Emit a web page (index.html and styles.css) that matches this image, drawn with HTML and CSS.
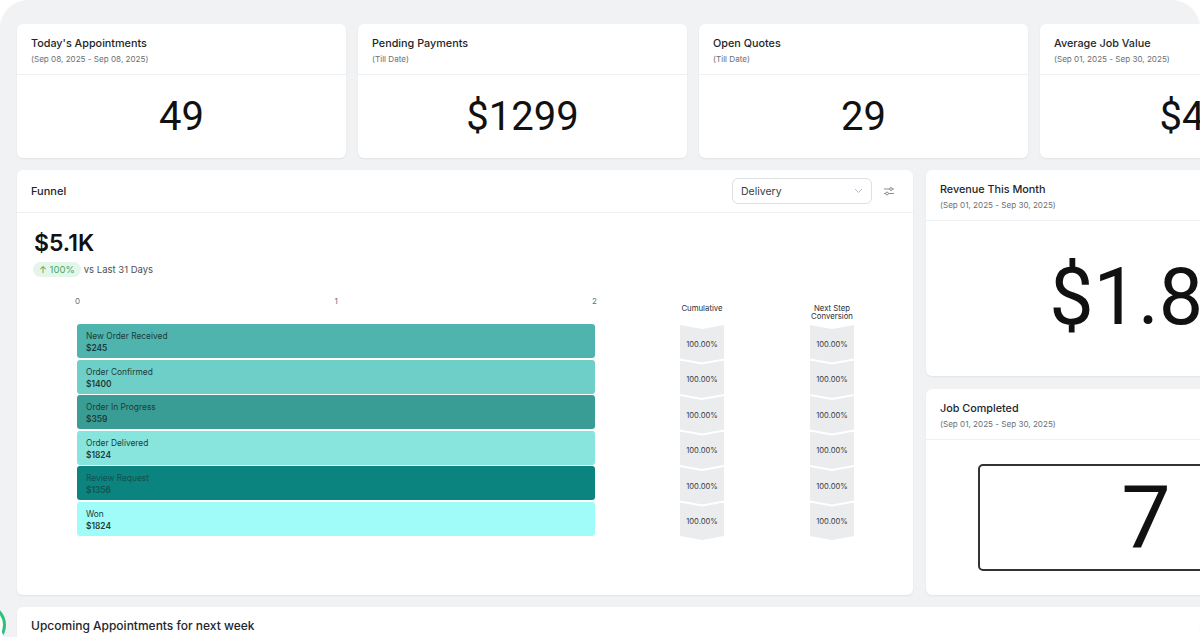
FILE: index.html
```html
<!DOCTYPE html>
<html lang="en">
<head>
<meta charset="utf-8">
<title>Dashboard</title>
<link rel="stylesheet" href="styles.css">
</head>
<body>
<div class="panel">
  <div class="row-stats">
    <div class="card stat">
      <div class="card-head">
        <div class="title">Today's Appointments</div>
        <div class="sub">(Sep 08, 2025 - Sep 08, 2025)</div>
      </div>
      <div class="stat-body">49</div>
    </div>
    <div class="card stat">
      <div class="card-head">
        <div class="title">Pending Payments</div>
        <div class="sub">(Till Date)</div>
      </div>
      <div class="stat-body">$1299</div>
    </div>
    <div class="card stat">
      <div class="card-head">
        <div class="title">Open Quotes</div>
        <div class="sub">(Till Date)</div>
      </div>
      <div class="stat-body">29</div>
    </div>
    <div class="card stat">
      <div class="card-head">
        <div class="title">Average Job Value</div>
        <div class="sub">(Sep 01, 2025 - Sep 30, 2025)</div>
      </div>
      <div class="stat-body">$450</div>
    </div>
  </div>

  <div class="row-main">
    <div class="card funnel">
      <div class="funnel-head">
        <div class="title">Funnel</div>
        <div class="head-tools">
          <div class="select">
            <span>Delivery</span>
            <svg width="9" height="6" viewBox="0 0 9 6"><path d="M1 1l3.5 3.5L8 1" fill="none" stroke="#b8bcc2" stroke-width="1"/></svg>
          </div>
          <svg class="filter" width="12" height="12" viewBox="0 0 12 12">
            <path d="M1 4h10M1 8.5h10" stroke="#8a8f96" stroke-width="1"/>
            <circle cx="8" cy="4" r="1.4" fill="#fff" stroke="#8a8f96" stroke-width="1"/>
            <circle cx="4" cy="8.5" r="1.4" fill="#fff" stroke="#8a8f96" stroke-width="1"/>
          </svg>
        </div>
      </div>
      <div class="funnel-body">
        <div class="big">$5.1K</div>
        <div class="trend">
          <span class="badge">↑ 100%</span>
          <span class="vs">vs Last 31 Days</span>
        </div>
        <div class="chart">
          <div class="bars-wrap">
            <div class="axis"><span>0</span><span>1</span><span>2</span></div>
            <div class="bars">
              <div class="bar b1"><div class="bl">New Order Received</div><div class="bv">$245</div></div>
              <div class="bar b2"><div class="bl">Order Confirmed</div><div class="bv">$1400</div></div>
              <div class="bar b3"><div class="bl">Order In Progress</div><div class="bv">$359</div></div>
              <div class="bar b4"><div class="bl">Order Delivered</div><div class="bv">$1824</div></div>
              <div class="bar b5"><div class="bl">Review Request</div><div class="bv">$1356</div></div>
              <div class="bar b6"><div class="bl">Won</div><div class="bv">$1824</div></div>
            </div>
          </div>
          <div class="col col-cum">
            <div class="col-head">Cumulative</div>
            <div class="cells">
              <div class="cell">100.00%</div>
              <div class="cell">100.00%</div>
              <div class="cell">100.00%</div>
              <div class="cell">100.00%</div>
              <div class="cell">100.00%</div>
              <div class="cell">100.00%</div>
            </div>
          </div>
          <div class="col col-next">
            <div class="col-head">Next Step<br>Conversion</div>
            <div class="cells">
              <div class="cell">100.00%</div>
              <div class="cell">100.00%</div>
              <div class="cell">100.00%</div>
              <div class="cell">100.00%</div>
              <div class="cell">100.00%</div>
              <div class="cell">100.00%</div>
            </div>
          </div>
        </div>
      </div>
    </div>

    <div class="side">
      <div class="card side-card">
        <div class="card-head">
          <div class="title">Revenue This Month</div>
          <div class="sub">(Sep 01, 2025 - Sep 30, 2025)</div>
        </div>
        <div class="rev-body">$1.8K</div>
      </div>
      <div class="card side-card">
        <div class="card-head">
          <div class="title">Job Completed</div>
          <div class="sub">(Sep 01, 2025 - Sep 30, 2025)</div>
        </div>
        <div class="job-body">
          <div class="job-box">7</div>
        </div>
      </div>
    </div>
  </div>

  <div class="card upcoming">
    <div class="card-head">
      <div class="title up-title">Upcoming Appointments for next week</div>
    </div>
  </div>
  <div class="fab-ring"></div>
</div>
</body>
</html>
```

FILE: styles.css
```css
* { box-sizing: border-box; }
html, body {
  margin: 0;
  padding: 0;
  background: #ffffff;
  overflow: hidden;
  width: 1200px;
  height: 637px;
}
body {
  font-family: Inter, "Noto Sans", "Liberation Sans", sans-serif;
  color: #1f2328;
}
.panel {
  position: relative;
  width: 1200px;
  height: 650px;
  background: #f1f2f4;
  border-radius: 28px;
  overflow: hidden;
  padding: 24px 0 0 17px;
  display: flex;
  flex-direction: column;
  gap: 12px;
}
.card {
  background: #ffffff;
  border-radius: 6px;
  box-shadow: 0 1px 2px rgba(16, 24, 40, 0.07);
  flex-shrink: 0;
}
.row-stats {
  display: flex;
  gap: 12px;
  height: 134px;
}
.stat {
  width: 329px;
  height: 134px;
  display: flex;
  flex-direction: column;
}
.card-head {
  height: 51px;
  padding: 13px 14px 0;
  border-bottom: 1px solid #eef0f2;
  flex-shrink: 0;
}
.title {
  font-size: 10.8px;
  line-height: 14px;
  font-weight: 500;
  color: #22262b;
}
.sub {
  font-size: 8.1px;
  line-height: 10px;
  margin-top: 3px;
  color: #6b6f75;
}
.stat-body {
  flex: 1;
  display: flex;
  align-items: center;
  justify-content: center;
  font-family: Roboto, "Liberation Sans", sans-serif;
  font-size: 40px;
  line-height: 1;
  color: #111;
  padding-top: 1px;
}
.row-main {
  display: flex;
  gap: 13px;
  height: 425px;
}
.funnel {
  width: 896px;
  height: 425px;
  display: flex;
  flex-direction: column;
}
.funnel-head {
  height: 43px;
  border-bottom: 1px solid #eef0f2;
  display: flex;
  align-items: center;
  justify-content: space-between;
  padding: 0 18px 0 14px;
}
.funnel-head .title { font-size: 11px; }
.head-tools {
  display: flex;
  align-items: center;
  gap: 11px;
}
.select {
  width: 140px;
  height: 26px;
  border: 1px solid #dcdfe3;
  border-radius: 6px;
  display: flex;
  align-items: center;
  justify-content: space-between;
  padding: 0 8px 0 8px;
  font-size: 10.5px;
  color: #3a3e44;
}
.funnel-body {
  padding: 17px 0 0 17px;
}
.big {
  font-size: 23px;
  line-height: 26px;
  font-weight: 600;
  color: #111;
}
.trend {
  display: flex;
  align-items: center;
  gap: 3px;
  margin-top: 6px;
  margin-left: -1px;
}
.badge {
  background: #e4f6e9;
  color: #45a866;
  border-radius: 8px;
  font-size: 9.5px;
  line-height: 15px;
  padding: 0 6px;
}
.vs {
  font-size: 9.5px;
  color: #4b4f55;
}
.chart {
  display: flex;
  align-items: flex-start;
  margin-top: 17px;
  padding-left: 43px;
}
.bars-wrap {
  width: 518px;
}
.axis {
  display: flex;
  justify-content: space-between;
  font-size: 8px;
  line-height: 14px;
  color: #6b6f75;
  margin: 0 -2px;
}
.bars {
  margin-top: 16px;
  display: flex;
  flex-direction: column;
  gap: 1.6px;
}
.bar {
  height: 34px;
  border-radius: 3px;
  padding: 6px 9px 0;
  color: #1d3b3a;
  font-size: 8.4px;
  line-height: 12px;
}
.bv { font-weight: 600; }
.b1 { background: #4fb4ad; }
.b2 { background: #6ecfc8; }
.b3 { background: #3a9d95; }
.b4 { background: #87e5de; }
.b5 { background: #0b847f; color: #14514e; }
.b6 { background: #a0fcf8; }
.col {
  width: 44px;
  flex-shrink: 0;
}
.col-cum { margin-left: 85px; }
.col-next { margin-left: 86px; }
.col-head {
  height: 31px;
  padding-top: 10px;
  font-size: 7.8px;
  line-height: 8px;
  text-align: center;
  color: #2a2e33;
  white-space: nowrap;
  margin: 0 -12px;
}
.cells {
  display: flex;
  flex-direction: column;
}
.cell {
  height: 37.5px;
  background: #ebecee;
  clip-path: polygon(0 0, 50% 4px, 100% 0, 100% calc(100% - 4px), 50% 100%, 0 calc(100% - 4px));
  font-size: 7.6px;
  color: #3a3e44;
  display: flex;
  align-items: center;
  justify-content: center;
  padding-top: 1px;
}
.cell + .cell { margin-top: -2px; }
.side {
  display: flex;
  flex-direction: column;
  gap: 13px;
  width: 454px;
  flex-shrink: 0;
}
.side-card {
  height: 206px;
  display: flex;
  flex-direction: column;
}
.rev-body {
  flex: 1;
  display: flex;
  align-items: center;
  justify-content: center;
  font-family: Roboto, "Liberation Sans", sans-serif;
  font-size: 79px;
  line-height: 1;
  color: #111;
  padding: 0 4px 2px 0;
}
.job-body {
  flex: 1;
  min-height: 0;
  padding: 24px 66px 24px 52px;
}
.job-box {
  height: 100%;
  border: 2px solid #333;
  border-radius: 5px;
  display: flex;
  align-items: center;
  justify-content: center;
  font-family: Roboto, "Liberation Sans", sans-serif;
  font-size: 88px;
  line-height: 1;
  color: #111;
}
.upcoming {
  width: 1300px;
  height: 80px;
}
.upcoming .card-head {
  padding-top: 12px;
  border-bottom: none;
}
.up-title { font-size: 12px; }
.fab-ring {
  position: absolute;
  left: -36px;
  top: 604px;
  width: 42px;
  height: 42px;
  border: 3px solid #2fc07e;
  border-radius: 50%;
  background: #fff;
}
```
